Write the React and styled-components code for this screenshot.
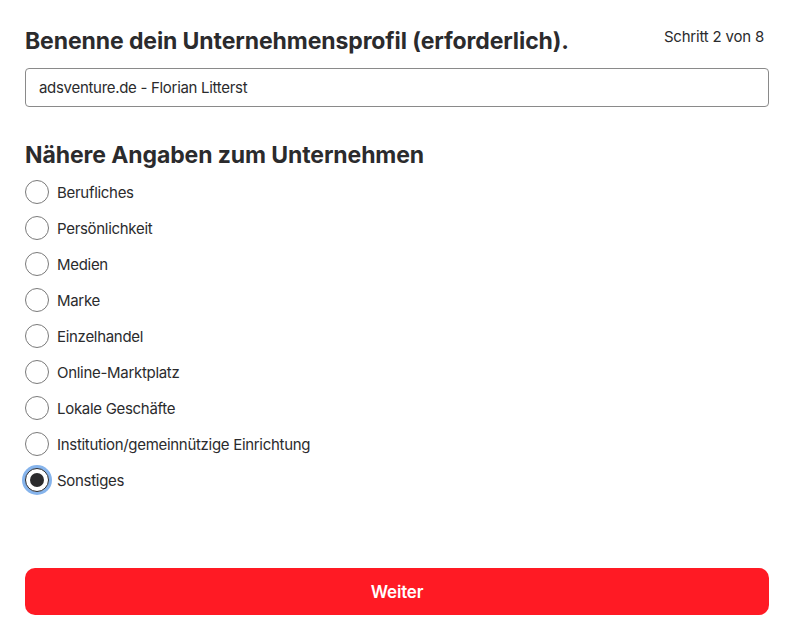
import React, { useState } from 'react';
import styled, { createGlobalStyle } from 'styled-components';

const GlobalStyle = createGlobalStyle`
  body {
    margin: 0;
    background: #ffffff;
    font-family: Inter, "Noto Sans", sans-serif;
    color: #2b2b2d;
  }
`;

const Page = styled.div`
  display: flex;
  flex-direction: column;
  padding: 26px 20px 0 25px;
`;

const HeaderRow = styled.div`
  display: flex;
  justify-content: space-between;
  align-items: flex-start;
`;

const Title = styled.h1`
  font-size: 23px;
  line-height: 30px;
  font-weight: 700;
  margin: 0;
  letter-spacing: -0.1px;
`;

const Step = styled.span`
  font-size: 15px;
  line-height: 20px;
  margin: 1px 5px 0 0;
  letter-spacing: -0.2px;
`;

const NameInput = styled.input`
  margin-top: 12px;
  height: 39px;
  box-sizing: border-box;
  border: 1px solid #8a8a8a;
  border-radius: 4px;
  padding: 0 13px;
  font-family: inherit;
  font-size: 15px;
  letter-spacing: -0.3px;
  color: #2b2b2d;
  outline: none;
`;

const SubTitle = styled.h2`
  font-size: 23px;
  line-height: 30px;
  font-weight: 700;
  margin: 33px 0 0 0;
  letter-spacing: -0.1px;
`;

const Options = styled.div`
  display: flex;
  flex-direction: column;
  margin-top: 4px;
`;

const Option = styled.label`
  display: flex;
  align-items: center;
  gap: 8px;
  height: 36px;
  font-size: 15px;
  letter-spacing: -0.3px;
  cursor: pointer;
`;

const Radio = styled.span`
  box-sizing: border-box;
  width: 24px;
  height: 24px;
  border-radius: 50%;
  border: 1px solid ${p => (p.$checked ? '#2b2b2d' : '#7a7a7a')};
  background: #fff;
  display: flex;
  align-items: center;
  justify-content: center;
  box-shadow: ${p => (p.$checked ? '0 0 0 3px #86b4ec' : 'none')};

  &::after {
    content: '';
    width: 14px;
    height: 14px;
    border-radius: 50%;
    background: #2b2b2d;
    display: ${p => (p.$checked ? 'block' : 'none')};
  }
`;

const SubmitButton = styled.button`
  margin-top: 70px;
  height: 47px;
  border: none;
  border-radius: 10px;
  background: #ff1a24;
  color: #fff;
  font-family: inherit;
  font-size: 17px;
  font-weight: 600;
  letter-spacing: -0.2px;
  cursor: pointer;
`;

const choices = [
  'Berufliches',
  'Persönlichkeit',
  'Medien',
  'Marke',
  'Einzelhandel',
  'Online-Marktplatz',
  'Lokale Geschäfte',
  'Institution/gemeinnützige Einrichtung',
  'Sonstiges',
];

function App() {
  const [name, setName] = useState('adsventure.de - Florian Litterst');
  const [selected, setSelected] = useState('Sonstiges');

  return (
    <>
      <GlobalStyle />
      <Page>
        <HeaderRow>
          <Title>Benenne dein Unternehmensprofil (erforderlich).</Title>
          <Step>Schritt 2 von 8</Step>
        </HeaderRow>
        <NameInput value={name} onChange={e => setName(e.target.value)} />
        <SubTitle>Nähere Angaben zum Unternehmen</SubTitle>
        <Options>
          {choices.map(c => (
            <Option key={c} onClick={() => setSelected(c)}>
              <Radio $checked={selected === c} />
              {c}
            </Option>
          ))}
        </Options>
        <SubmitButton>Weiter</SubmitButton>
      </Page>
    </>
  );
}

export default App;
